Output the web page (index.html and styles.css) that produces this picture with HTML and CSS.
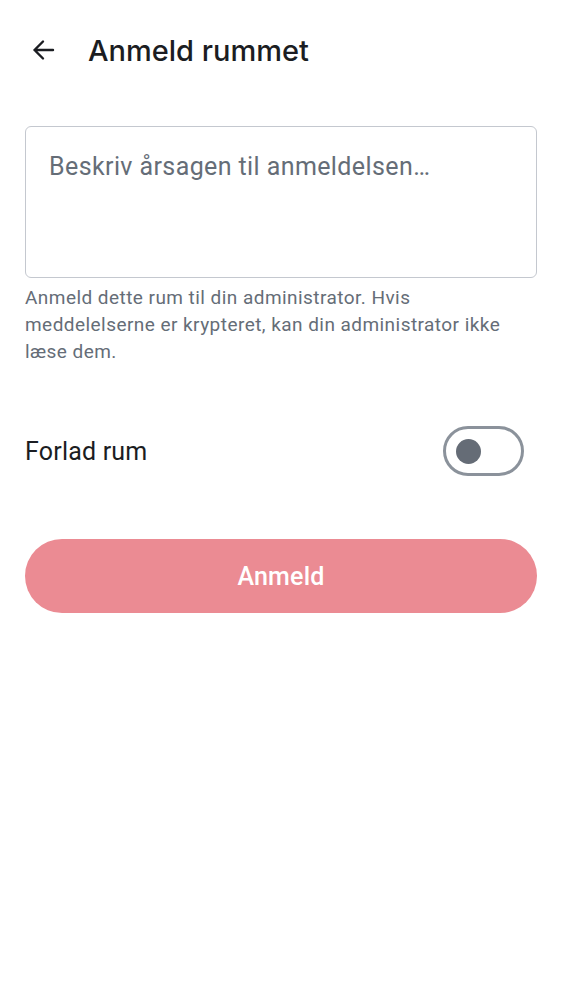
FILE: index.html
```html
<!DOCTYPE html>
<html lang="da">
<head>
<meta charset="utf-8">
<title>Anmeld rummet</title>
<link rel="stylesheet" href="styles.css">
</head>
<body>
<header class="topbar">
  <button class="back" aria-label="Tilbage">
    <svg width="28" height="28" viewBox="0 0 28 28"><path d="M24 14H5.5M14 5.5L5.5 14L14 22.5" fill="none" stroke="#1b1d22" stroke-width="2.4" stroke-linecap="round" stroke-linejoin="round"/></svg>
  </button>
  <h1 class="title">Anmeld rummet</h1>
</header>
<main class="content">
  <div class="field">
    <textarea class="reason" placeholder="Beskriv årsagen til anmeldelsen…"></textarea>
  </div>
  <p class="helper">Anmeld dette rum til din administrator. Hvis meddelelserne er krypteret, kan din administrator ikke læse dem.</p>
  <div class="row">
    <span class="row-label">Forlad rum</span>
    <span class="switch"><span class="knob"></span></span>
  </div>
  <button class="submit">Anmeld</button>
</main>
</body>
</html>
```

FILE: styles.css
```css
* { box-sizing: border-box; }
html, body { margin: 0; padding: 0; background: #ffffff; }
body { font-family: Roboto, "Noto Sans", sans-serif; color: #1b1d22; width: 562px; }

.topbar {
  height: 100px;
  display: flex;
  align-items: center;
  padding-left: 29px;
}
.back {
  width: 28px; height: 28px;
  padding: 0; border: 0; background: none;
  display: flex; align-items: center; justify-content: center;
}
.title {
  margin: 0 0 0 31px;
  font-family: Inter, Roboto, sans-serif;
  font-weight: 500;
  font-size: 29px;
  color: #1b1d22;
  letter-spacing: 0;
}

.content { padding: 26px 25px 0 25px; }

.field { width: 512px; }
.reason {
  display: block;
  width: 512px;
  height: 152px;
  border: 1.5px solid #c4c8cf;
  border-radius: 6px;
  padding: 25px 23px;
  font-family: Roboto, sans-serif;
  font-size: 25px;
  letter-spacing: 0.4px;
  color: #1b1d22;
  resize: none;
  outline: none;
  background: #fff;
}
.reason::placeholder { color: #656d77; opacity: 1; }

.helper {
  margin: 6px 0 0 0;
  font-size: 19px;
  line-height: 27px;
  letter-spacing: 0.45px;
  color: #656d77;
  width: 512px;
}

.row {
  margin-top: 61px;
  height: 50px;
  display: flex;
  align-items: center;
  justify-content: space-between;
  padding-right: 13px;
}
.row-label { font-size: 25px; color: #1b1d22; letter-spacing: 0.2px; }
.switch {
  width: 81px; height: 50px;
  border: 3px solid #8b929b;
  border-radius: 25px;
  display: flex; align-items: center;
  padding-left: 10px;
}
.knob {
  width: 25px; height: 25px;
  border-radius: 50%;
  background: #656c76;
}

.submit {
  margin-top: 63px;
  width: 512px; height: 74px;
  border: 0; border-radius: 37px;
  background: #eb8b93;
  color: #ffffff;
  font-family: Roboto, sans-serif;
  font-weight: 500;
  font-size: 25px;
  letter-spacing: 0.2px;
  display: flex; align-items: center; justify-content: center;
}
```
